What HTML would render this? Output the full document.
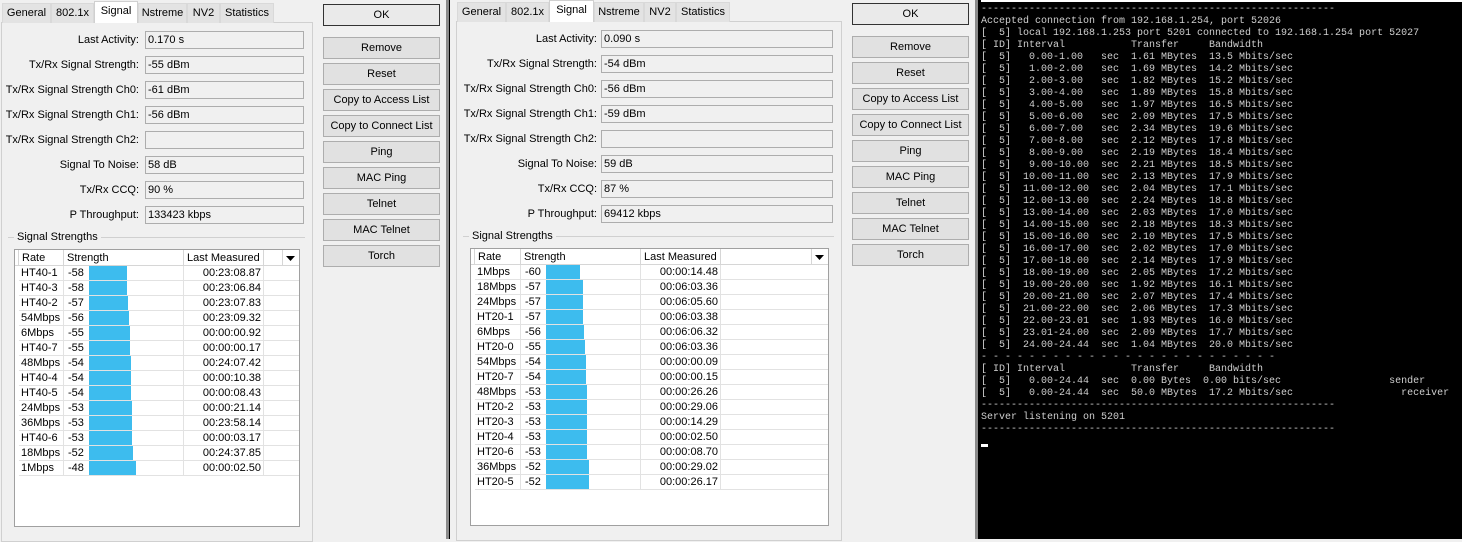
<!DOCTYPE html>
<html><head><meta charset="utf-8"><style>
*{margin:0;padding:0;box-sizing:border-box}
body{width:1462px;height:539px;overflow:hidden;background:#f0f0f0;font-family:"Liberation Sans",sans-serif;font-size:11px;color:#000;position:relative}
.a{position:absolute}
.tab{position:absolute;height:20px;border:1px solid #d9d9d9;border-bottom:none;background:#e3e3e3;text-align:center;line-height:18px;font-size:11px}
.tab.on{background:#fff;height:22px;border-color:#d0d0d0;z-index:2}
.box{position:absolute;border:1px solid #d0d0d0;background:#f0f0f0}
.lbl{position:absolute;text-align:right;line-height:18px;white-space:nowrap}
.fld{position:absolute;height:18px;border:1px solid #adadad;background:#f0f0f0;line-height:16px;padding-left:2px;white-space:nowrap}
.btn{position:absolute;width:117px;height:22px;border:1px solid #adadad;background:#e1e1e1;text-align:center;line-height:20px}
.btn.ok{border:1px solid #333;background:#eaeaea}
.tbl{position:absolute;background:#fff;border:1px solid #a0a0a0}
.hd{position:absolute;top:0;height:16px;border-right:1px solid #d6d6d6;border-bottom:1px solid #d6d6d6;background:#fff;padding-left:3px;line-height:16px;white-space:nowrap}
.row{position:absolute;height:15px;border-bottom:1px solid #e2e2e2}
.row div{position:absolute;top:0;height:14px;line-height:14px;border-right:1px solid #e2e2e2;white-space:nowrap}
.bar{position:absolute;background:#3dbcee;height:11px;top:2px;border:none!important}
.term{position:absolute;left:978px;top:0;width:484px;height:539px;background:#000}
pre{position:absolute;left:3px;top:4px;font-family:"Liberation Mono",monospace;font-size:10px;line-height:12px;color:#cfcfcf}
</style></head><body>

<!-- Panel 1 -->
<div class="box" style="left:1px;top:22px;width:312px;height:520px"></div>
<div class="tab" style="left:2px;top:3px;width:49px">General</div>
<div class="tab" style="left:51px;top:3px;width:43px">802.1x</div>
<div class="tab on" style="left:94px;top:1px;width:44px">Signal</div>
<div class="tab" style="left:138px;top:3px;width:49px">Nstreme</div>
<div class="tab" style="left:187px;top:3px;width:33px">NV2</div>
<div class="tab" style="left:220px;top:3px;width:54px">Statistics</div>

<div class="lbl" style="left:0;width:139px;top:31px">Last Activity:</div><div class="fld" style="left:145px;top:31px;width:159px">0.170 s</div>
<div class="lbl" style="left:0;width:139px;top:56px">Tx/Rx Signal Strength:</div><div class="fld" style="left:145px;top:56px;width:159px">-55 dBm</div>
<div class="lbl" style="left:0;width:139px;top:81px">Tx/Rx Signal Strength Ch0:</div><div class="fld" style="left:145px;top:81px;width:159px">-61 dBm</div>
<div class="lbl" style="left:0;width:139px;top:106px">Tx/Rx Signal Strength Ch1:</div><div class="fld" style="left:145px;top:106px;width:159px">-56 dBm</div>
<div class="lbl" style="left:0;width:139px;top:131px">Tx/Rx Signal Strength Ch2:</div><div class="fld" style="left:145px;top:131px;width:159px"></div>
<div class="lbl" style="left:0;width:139px;top:156px">Signal To Noise:</div><div class="fld" style="left:145px;top:156px;width:159px">58 dB</div>
<div class="lbl" style="left:0;width:139px;top:181px">Tx/Rx CCQ:</div><div class="fld" style="left:145px;top:181px;width:159px">90 %</div>
<div class="lbl" style="left:0;width:139px;top:206px">P Throughput:</div><div class="fld" style="left:145px;top:206px;width:159px">133423 kbps</div>

<div class="a" style="left:8px;top:237px;width:297px;border-top:1px solid #d0d0d0"></div>
<div class="a" style="left:14px;top:230px;padding:0 3px;background:#f0f0f0;line-height:14px">Signal Strengths</div>

<div class="tbl" style="left:14px;top:249px;width:286px;height:278px">
<div class="hd" style="left:0;width:4px;padding:0"></div>
<div class="hd" style="left:4px;width:45px">Rate</div>
<div class="hd" style="left:49px;width:120px">Strength</div>
<div class="hd" style="left:169px;width:80px">Last Measured</div>
<div class="hd" style="left:249px;width:19px"></div>
<div class="hd" style="left:268px;width:16px;border-right:none;padding:0"><svg width="16" height="16"><path d="M3 6h9l-4.5 5z" fill="#000"/></svg></div>
<div style="position:absolute;left:0;top:16px;width:284px">
<div class="row" style="top:0;left:4px;width:280px"><div style="left:0;width:45px;padding-left:2px">HT40-1</div><div style="left:45px;width:120px;padding-left:4px">-58</div><div class="bar" style="left:70px;width:38px"></div><div style="left:165px;width:80px;text-align:right;padding-right:2px">00:23:08.87</div></div>
<div class="row" style="top:15px;left:4px;width:280px"><div style="left:0;width:45px;padding-left:2px">HT40-3</div><div style="left:45px;width:120px;padding-left:4px">-58</div><div class="bar" style="left:70px;width:38px"></div><div style="left:165px;width:80px;text-align:right;padding-right:2px">00:23:06.84</div></div>
<div class="row" style="top:30px;left:4px;width:280px"><div style="left:0;width:45px;padding-left:2px">HT40-2</div><div style="left:45px;width:120px;padding-left:4px">-57</div><div class="bar" style="left:70px;width:39px"></div><div style="left:165px;width:80px;text-align:right;padding-right:2px">00:23:07.83</div></div>
<div class="row" style="top:45px;left:4px;width:280px"><div style="left:0;width:45px;padding-left:2px">54Mbps</div><div style="left:45px;width:120px;padding-left:4px">-56</div><div class="bar" style="left:70px;width:40px"></div><div style="left:165px;width:80px;text-align:right;padding-right:2px">00:23:09.32</div></div>
<div class="row" style="top:60px;left:4px;width:280px"><div style="left:0;width:45px;padding-left:2px">6Mbps</div><div style="left:45px;width:120px;padding-left:4px">-55</div><div class="bar" style="left:70px;width:41px"></div><div style="left:165px;width:80px;text-align:right;padding-right:2px">00:00:00.92</div></div>
<div class="row" style="top:75px;left:4px;width:280px"><div style="left:0;width:45px;padding-left:2px">HT40-7</div><div style="left:45px;width:120px;padding-left:4px">-55</div><div class="bar" style="left:70px;width:41px"></div><div style="left:165px;width:80px;text-align:right;padding-right:2px">00:00:00.17</div></div>
<div class="row" style="top:90px;left:4px;width:280px"><div style="left:0;width:45px;padding-left:2px">48Mbps</div><div style="left:45px;width:120px;padding-left:4px">-54</div><div class="bar" style="left:70px;width:42px"></div><div style="left:165px;width:80px;text-align:right;padding-right:2px">00:24:07.42</div></div>
<div class="row" style="top:105px;left:4px;width:280px"><div style="left:0;width:45px;padding-left:2px">HT40-4</div><div style="left:45px;width:120px;padding-left:4px">-54</div><div class="bar" style="left:70px;width:42px"></div><div style="left:165px;width:80px;text-align:right;padding-right:2px">00:00:10.38</div></div>
<div class="row" style="top:120px;left:4px;width:280px"><div style="left:0;width:45px;padding-left:2px">HT40-5</div><div style="left:45px;width:120px;padding-left:4px">-54</div><div class="bar" style="left:70px;width:42px"></div><div style="left:165px;width:80px;text-align:right;padding-right:2px">00:00:08.43</div></div>
<div class="row" style="top:135px;left:4px;width:280px"><div style="left:0;width:45px;padding-left:2px">24Mbps</div><div style="left:45px;width:120px;padding-left:4px">-53</div><div class="bar" style="left:70px;width:43px"></div><div style="left:165px;width:80px;text-align:right;padding-right:2px">00:00:21.14</div></div>
<div class="row" style="top:150px;left:4px;width:280px"><div style="left:0;width:45px;padding-left:2px">36Mbps</div><div style="left:45px;width:120px;padding-left:4px">-53</div><div class="bar" style="left:70px;width:43px"></div><div style="left:165px;width:80px;text-align:right;padding-right:2px">00:23:58.14</div></div>
<div class="row" style="top:165px;left:4px;width:280px"><div style="left:0;width:45px;padding-left:2px">HT40-6</div><div style="left:45px;width:120px;padding-left:4px">-53</div><div class="bar" style="left:70px;width:43px"></div><div style="left:165px;width:80px;text-align:right;padding-right:2px">00:00:03.17</div></div>
<div class="row" style="top:180px;left:4px;width:280px"><div style="left:0;width:45px;padding-left:2px">18Mbps</div><div style="left:45px;width:120px;padding-left:4px">-52</div><div class="bar" style="left:70px;width:44px"></div><div style="left:165px;width:80px;text-align:right;padding-right:2px">00:24:37.85</div></div>
<div class="row" style="top:195px;left:4px;width:280px"><div style="left:0;width:45px;padding-left:2px">1Mbps</div><div style="left:45px;width:120px;padding-left:4px">-48</div><div class="bar" style="left:70px;width:47px"></div><div style="left:165px;width:80px;text-align:right;padding-right:2px">00:00:02.50</div></div>
</div>
</div>

<div class="btn ok" style="left:323px;top:4px">OK</div>
<div class="btn" style="left:323px;top:37px">Remove</div>
<div class="btn" style="left:323px;top:63px">Reset</div>
<div class="btn" style="left:323px;top:89px">Copy to Access List</div>
<div class="btn" style="left:323px;top:115px">Copy to Connect List</div>
<div class="btn" style="left:323px;top:141px">Ping</div>
<div class="btn" style="left:323px;top:167px">MAC Ping</div>
<div class="btn" style="left:323px;top:193px">Telnet</div>
<div class="btn" style="left:323px;top:219px">MAC Telnet</div>
<div class="btn" style="left:323px;top:245px">Torch</div>

<div class="a" style="left:446px;top:0;width:4px;height:539px;background:#8a8a8a;border-right:1px solid #000"></div>

<!-- Panel 2 -->
<div class="box" style="left:456px;top:21px;width:386px;height:520px"></div>
<div class="tab" style="left:457px;top:2px;width:49px">General</div>
<div class="tab" style="left:506px;top:2px;width:43px">802.1x</div>
<div class="tab on" style="left:549px;top:0;width:45px">Signal</div>
<div class="tab" style="left:594px;top:2px;width:50px">Nstreme</div>
<div class="tab" style="left:644px;top:2px;width:32px">NV2</div>
<div class="tab" style="left:676px;top:2px;width:54px">Statistics</div>

<div class="lbl" style="left:455px;width:142px;top:30px">Last Activity:</div><div class="fld" style="left:601px;top:30px;width:232px">0.090 s</div>
<div class="lbl" style="left:455px;width:142px;top:55px">Tx/Rx Signal Strength:</div><div class="fld" style="left:601px;top:55px;width:232px">-54 dBm</div>
<div class="lbl" style="left:455px;width:142px;top:80px">Tx/Rx Signal Strength Ch0:</div><div class="fld" style="left:601px;top:80px;width:232px">-56 dBm</div>
<div class="lbl" style="left:455px;width:142px;top:105px">Tx/Rx Signal Strength Ch1:</div><div class="fld" style="left:601px;top:105px;width:232px">-59 dBm</div>
<div class="lbl" style="left:455px;width:142px;top:130px">Tx/Rx Signal Strength Ch2:</div><div class="fld" style="left:601px;top:130px;width:232px"></div>
<div class="lbl" style="left:455px;width:142px;top:155px">Signal To Noise:</div><div class="fld" style="left:601px;top:155px;width:232px">59 dB</div>
<div class="lbl" style="left:455px;width:142px;top:180px">Tx/Rx CCQ:</div><div class="fld" style="left:601px;top:180px;width:232px">87 %</div>
<div class="lbl" style="left:455px;width:142px;top:205px">P Throughput:</div><div class="fld" style="left:601px;top:205px;width:232px">69412 kbps</div>

<div class="a" style="left:463px;top:236px;width:371px;border-top:1px solid #d0d0d0"></div>
<div class="a" style="left:469px;top:229px;padding:0 3px;background:#f0f0f0;line-height:14px">Signal Strengths</div>

<div class="tbl" style="left:470px;top:248px;width:359px;height:278px">
<div class="hd" style="left:0;width:4px;padding:0"></div>
<div class="hd" style="left:4px;width:46px">Rate</div>
<div class="hd" style="left:50px;width:120px">Strength</div>
<div class="hd" style="left:170px;width:80px">Last Measured</div>
<div class="hd" style="left:250px;width:91px"></div>
<div class="hd" style="left:341px;width:16px;border-right:none;padding:0"><svg width="16" height="16"><path d="M3 6h9l-4.5 5z" fill="#000"/></svg></div>
<div style="position:absolute;left:0;top:16px;width:357px">
<div class="row" style="top:0;left:4px;width:353px"><div style="left:0;width:46px;padding-left:2px">1Mbps</div><div style="left:46px;width:120px;padding-left:4px">-60</div><div class="bar" style="left:71px;width:34px"></div><div style="left:166px;width:80px;text-align:right;padding-right:2px">00:00:14.48</div></div>
<div class="row" style="top:15px;left:4px;width:353px"><div style="left:0;width:46px;padding-left:2px">18Mbps</div><div style="left:46px;width:120px;padding-left:4px">-57</div><div class="bar" style="left:71px;width:37px"></div><div style="left:166px;width:80px;text-align:right;padding-right:2px">00:06:03.36</div></div>
<div class="row" style="top:30px;left:4px;width:353px"><div style="left:0;width:46px;padding-left:2px">24Mbps</div><div style="left:46px;width:120px;padding-left:4px">-57</div><div class="bar" style="left:71px;width:37px"></div><div style="left:166px;width:80px;text-align:right;padding-right:2px">00:06:05.60</div></div>
<div class="row" style="top:45px;left:4px;width:353px"><div style="left:0;width:46px;padding-left:2px">HT20-1</div><div style="left:46px;width:120px;padding-left:4px">-57</div><div class="bar" style="left:71px;width:37px"></div><div style="left:166px;width:80px;text-align:right;padding-right:2px">00:06:03.38</div></div>
<div class="row" style="top:60px;left:4px;width:353px"><div style="left:0;width:46px;padding-left:2px">6Mbps</div><div style="left:46px;width:120px;padding-left:4px">-56</div><div class="bar" style="left:71px;width:38px"></div><div style="left:166px;width:80px;text-align:right;padding-right:2px">00:06:06.32</div></div>
<div class="row" style="top:75px;left:4px;width:353px"><div style="left:0;width:46px;padding-left:2px">HT20-0</div><div style="left:46px;width:120px;padding-left:4px">-55</div><div class="bar" style="left:71px;width:39px"></div><div style="left:166px;width:80px;text-align:right;padding-right:2px">00:06:03.36</div></div>
<div class="row" style="top:90px;left:4px;width:353px"><div style="left:0;width:46px;padding-left:2px">54Mbps</div><div style="left:46px;width:120px;padding-left:4px">-54</div><div class="bar" style="left:71px;width:40px"></div><div style="left:166px;width:80px;text-align:right;padding-right:2px">00:00:00.09</div></div>
<div class="row" style="top:105px;left:4px;width:353px"><div style="left:0;width:46px;padding-left:2px">HT20-7</div><div style="left:46px;width:120px;padding-left:4px">-54</div><div class="bar" style="left:71px;width:40px"></div><div style="left:166px;width:80px;text-align:right;padding-right:2px">00:00:00.15</div></div>
<div class="row" style="top:120px;left:4px;width:353px"><div style="left:0;width:46px;padding-left:2px">48Mbps</div><div style="left:46px;width:120px;padding-left:4px">-53</div><div class="bar" style="left:71px;width:41px"></div><div style="left:166px;width:80px;text-align:right;padding-right:2px">00:00:26.26</div></div>
<div class="row" style="top:135px;left:4px;width:353px"><div style="left:0;width:46px;padding-left:2px">HT20-2</div><div style="left:46px;width:120px;padding-left:4px">-53</div><div class="bar" style="left:71px;width:41px"></div><div style="left:166px;width:80px;text-align:right;padding-right:2px">00:00:29.06</div></div>
<div class="row" style="top:150px;left:4px;width:353px"><div style="left:0;width:46px;padding-left:2px">HT20-3</div><div style="left:46px;width:120px;padding-left:4px">-53</div><div class="bar" style="left:71px;width:41px"></div><div style="left:166px;width:80px;text-align:right;padding-right:2px">00:00:14.29</div></div>
<div class="row" style="top:165px;left:4px;width:353px"><div style="left:0;width:46px;padding-left:2px">HT20-4</div><div style="left:46px;width:120px;padding-left:4px">-53</div><div class="bar" style="left:71px;width:41px"></div><div style="left:166px;width:80px;text-align:right;padding-right:2px">00:00:02.50</div></div>
<div class="row" style="top:180px;left:4px;width:353px"><div style="left:0;width:46px;padding-left:2px">HT20-6</div><div style="left:46px;width:120px;padding-left:4px">-53</div><div class="bar" style="left:71px;width:41px"></div><div style="left:166px;width:80px;text-align:right;padding-right:2px">00:00:08.70</div></div>
<div class="row" style="top:195px;left:4px;width:353px"><div style="left:0;width:46px;padding-left:2px">36Mbps</div><div style="left:46px;width:120px;padding-left:4px">-52</div><div class="bar" style="left:71px;width:43px"></div><div style="left:166px;width:80px;text-align:right;padding-right:2px">00:00:29.02</div></div>
<div class="row" style="top:210px;left:4px;width:353px"><div style="left:0;width:46px;padding-left:2px">HT20-5</div><div style="left:46px;width:120px;padding-left:4px">-52</div><div class="bar" style="left:71px;width:43px"></div><div style="left:166px;width:80px;text-align:right;padding-right:2px">00:00:26.17</div></div>
</div>
</div>

<div class="btn ok" style="left:852px;top:3px">OK</div>
<div class="btn" style="left:852px;top:36px">Remove</div>
<div class="btn" style="left:852px;top:62px">Reset</div>
<div class="btn" style="left:852px;top:88px">Copy to Access List</div>
<div class="btn" style="left:852px;top:114px">Copy to Connect List</div>
<div class="btn" style="left:852px;top:140px">Ping</div>
<div class="btn" style="left:852px;top:166px">MAC Ping</div>
<div class="btn" style="left:852px;top:192px">Telnet</div>
<div class="btn" style="left:852px;top:218px">MAC Telnet</div>
<div class="btn" style="left:852px;top:244px">Torch</div>

<div class="a" style="left:975px;top:0;width:3px;height:539px;background:#8a8a8a"></div>

<!-- Terminal -->
<div class="term">
<div class="a" style="left:3px;top:0;width:481px;height:2px;background:#fff"></div>
<pre>-----------------------------------------------------------
Accepted connection from 192.168.1.254, port 52026
[  5] local 192.168.1.253 port 5201 connected to 192.168.1.254 port 52027
[ ID] Interval           Transfer     Bandwidth
[  5]   0.00-1.00   sec  1.61 MBytes  13.5 Mbits/sec
[  5]   1.00-2.00   sec  1.69 MBytes  14.2 Mbits/sec
[  5]   2.00-3.00   sec  1.82 MBytes  15.2 Mbits/sec
[  5]   3.00-4.00   sec  1.89 MBytes  15.8 Mbits/sec
[  5]   4.00-5.00   sec  1.97 MBytes  16.5 Mbits/sec
[  5]   5.00-6.00   sec  2.09 MBytes  17.5 Mbits/sec
[  5]   6.00-7.00   sec  2.34 MBytes  19.6 Mbits/sec
[  5]   7.00-8.00   sec  2.12 MBytes  17.8 Mbits/sec
[  5]   8.00-9.00   sec  2.19 MBytes  18.4 Mbits/sec
[  5]   9.00-10.00  sec  2.21 MBytes  18.5 Mbits/sec
[  5]  10.00-11.00  sec  2.13 MBytes  17.9 Mbits/sec
[  5]  11.00-12.00  sec  2.04 MBytes  17.1 Mbits/sec
[  5]  12.00-13.00  sec  2.24 MBytes  18.8 Mbits/sec
[  5]  13.00-14.00  sec  2.03 MBytes  17.0 Mbits/sec
[  5]  14.00-15.00  sec  2.18 MBytes  18.3 Mbits/sec
[  5]  15.00-16.00  sec  2.10 MBytes  17.5 Mbits/sec
[  5]  16.00-17.00  sec  2.02 MBytes  17.0 Mbits/sec
[  5]  17.00-18.00  sec  2.14 MBytes  17.9 Mbits/sec
[  5]  18.00-19.00  sec  2.05 MBytes  17.2 Mbits/sec
[  5]  19.00-20.00  sec  1.92 MBytes  16.1 Mbits/sec
[  5]  20.00-21.00  sec  2.07 MBytes  17.4 Mbits/sec
[  5]  21.00-22.00  sec  2.06 MBytes  17.3 Mbits/sec
[  5]  22.00-23.01  sec  1.93 MBytes  16.0 Mbits/sec
[  5]  23.01-24.00  sec  2.09 MBytes  17.7 Mbits/sec
[  5]  24.00-24.44  sec  1.04 MBytes  20.0 Mbits/sec
- - - - - - - - - - - - - - - - - - - - - - - - -
[ ID] Interval           Transfer     Bandwidth
[  5]   0.00-24.44  sec  0.00 Bytes  0.00 bits/sec                  sender
[  5]   0.00-24.44  sec  50.0 MBytes  17.2 Mbits/sec                  receiver
-----------------------------------------------------------
Server listening on 5201
-----------------------------------------------------------
</pre>
<div class="a" style="left:3px;top:444px;width:7px;height:3px;background:#fff"></div>
</div>
</body></html>
